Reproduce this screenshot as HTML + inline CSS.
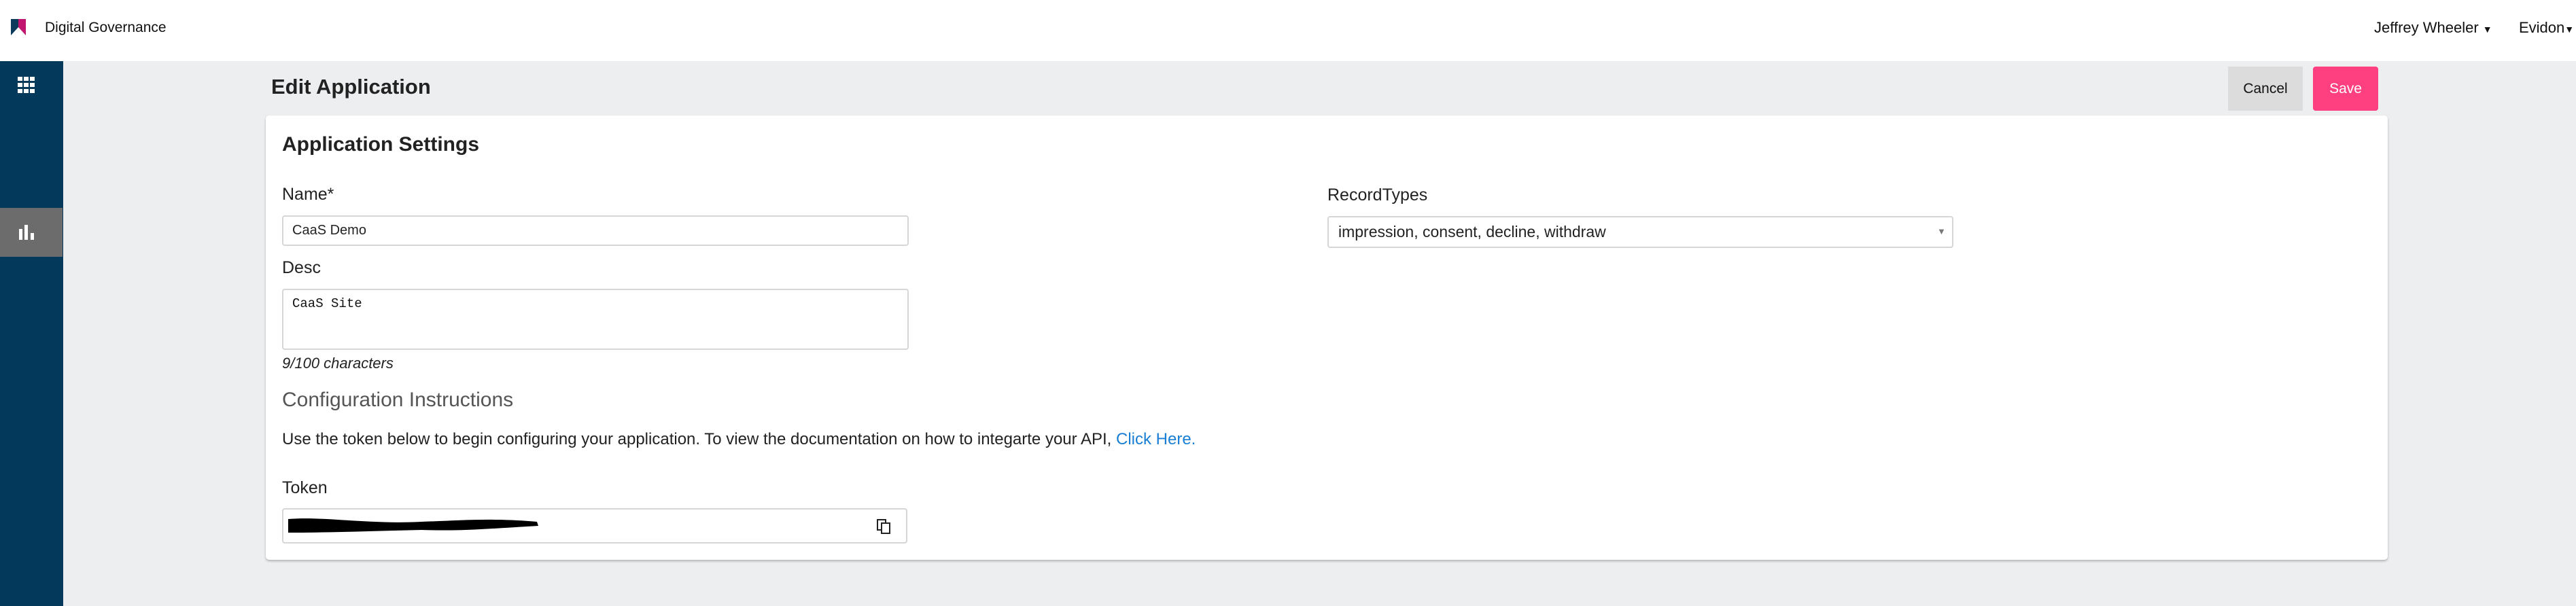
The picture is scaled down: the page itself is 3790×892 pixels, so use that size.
<!DOCTYPE html>
<html><head><meta charset="utf-8"><style>
*{box-sizing:border-box;margin:0;padding:0}
body{width:3790px;height:892px;background:#eceef0;font-family:"Liberation Sans",Arial,sans-serif;position:relative;overflow:hidden;color:#222}
.abs{position:absolute;white-space:nowrap}
.hdr{left:0;top:0;width:3790px;height:90px;background:#fff}
.side{left:0;top:90px;width:93px;height:802px;background:#033a5b}
.lbl{font-size:25px;color:#222;white-space:nowrap}
.inp{background:#fff;border:2px solid #d6d6d6;border-radius:4px}
</style></head><body>
<div class="abs hdr"></div>
<svg class="abs" style="left:16px;top:28px" width="22" height="24" viewBox="0 0 22 24"><polygon points="0,0 11,0 11,12 0,24" fill="#0b3a5c"/><polygon points="11,0 22,0 22,24 11,12" fill="#c0166f"/></svg>
<div class="abs" style="left:66px;top:29px;font-size:21px;color:#111">Digital Governance</div>
<div class="abs" style="left:3493px;top:28px;font-size:22px;color:#111">Jeffrey Wheeler <span style="font-size:14px">&#9660;</span></div>
<div class="abs" style="left:3706px;top:28px;font-size:22px;color:#111">Evidon<span style="font-size:14px">&#9660;</span></div>
<div class="abs side"></div>
<svg class="abs" style="left:26px;top:113px" width="26" height="24"><g fill="#fff"><rect x="0" y="0" width="7" height="6"/><rect x="9" y="0" width="7" height="6"/><rect x="18" y="0" width="7" height="6"/><rect x="0" y="9" width="7" height="6"/><rect x="9" y="9" width="7" height="6"/><rect x="18" y="9" width="7" height="6"/><rect x="0" y="18" width="7" height="6"/><rect x="9" y="18" width="7" height="6"/><rect x="18" y="18" width="7" height="6"/></g></svg>
<div class="abs" style="left:0;top:306px;width:92px;height:72px;background:#6c6c6c"></div>
<svg class="abs" style="left:28px;top:331px" width="24" height="23"><g fill="#fff"><rect x="0" y="6" width="5" height="16"/><rect x="8" y="0" width="5" height="22"/><rect x="17" y="12" width="5" height="10"/></g></svg>
<div class="abs" style="left:399px;top:110px;font-size:31px;font-weight:bold;color:#222">Edit Application</div>
<div class="abs" style="left:3278px;top:98px;width:110px;height:65px;background:#dcdcdc;font-size:21px;line-height:65px;text-align:center;color:#111">Cancel</div>
<div class="abs" style="left:3403px;top:98px;width:96px;height:65px;background:#fe4080;border-radius:4px;font-size:21px;line-height:65px;text-align:center;color:#fff">Save</div>
<div class="abs" style="left:391px;top:170px;width:3122px;height:654px;background:#fff;border-radius:5px;box-shadow:0 2px 3px rgba(0,0,0,.25)"></div>
<div class="abs" style="left:415px;top:196px;font-size:30px;font-weight:bold;color:#222">Application Settings</div>
<div class="abs lbl" style="left:415px;top:272px">Name*</div>
<div class="abs inp" style="left:415px;top:317px;width:922px;height:45px"></div>
<div class="abs" style="left:430px;top:328px;font-size:20px;color:#222">CaaS Demo</div>
<div class="abs lbl" style="left:415px;top:380px">Desc</div>
<div class="abs inp" style="left:415px;top:425px;width:922px;height:90px"></div>
<div class="abs" style="left:430px;top:436px;font-size:19px;font-family:'Liberation Mono',monospace;color:#111">CaaS Site</div>
<div class="abs" style="left:415px;top:522px;font-size:22px;font-style:italic;color:#222">9/100 characters</div>
<div class="abs" style="left:415px;top:572px;font-size:30px;font-weight:300;color:#555">Configuration Instructions</div>
<div class="abs" style="left:415px;top:633px;font-size:24px;color:#222">Use the token below to begin configuring your application. To view the documentation on how to integarte your API, <span style="color:#1a7fd4">Click Here.</span></div>
<div class="abs lbl" style="left:415px;top:704px">Token</div>
<div class="abs inp" style="left:415px;top:748px;width:920px;height:52px"></div>
<svg class="abs" style="left:420px;top:758px" width="380" height="30"><path d="M4 6 C60 2 120 14 200 10 C260 8 300 4 370 10 L372 16 C300 20 260 24 200 22 C120 24 60 26 4 26 Z" fill="#000"/></svg>
<svg class="abs" style="left:1289px;top:763px" width="24" height="24" fill="none" stroke="#222" stroke-width="2"><rect x="2" y="2" width="12" height="15"/><rect x="8" y="7" width="12" height="15" fill="#fff"/></svg>
<div class="abs lbl" style="left:1953px;top:273px">RecordTypes</div>
<div class="abs inp" style="left:1953px;top:318px;width:921px;height:47px"></div>
<div class="abs" style="left:1969px;top:328px;font-size:23px;color:#222">impression, consent, decline, withdraw</div>
<div class="abs" style="left:2850px;top:333px;font-size:13px;color:#777">&#9660;</div>
</body></html>
